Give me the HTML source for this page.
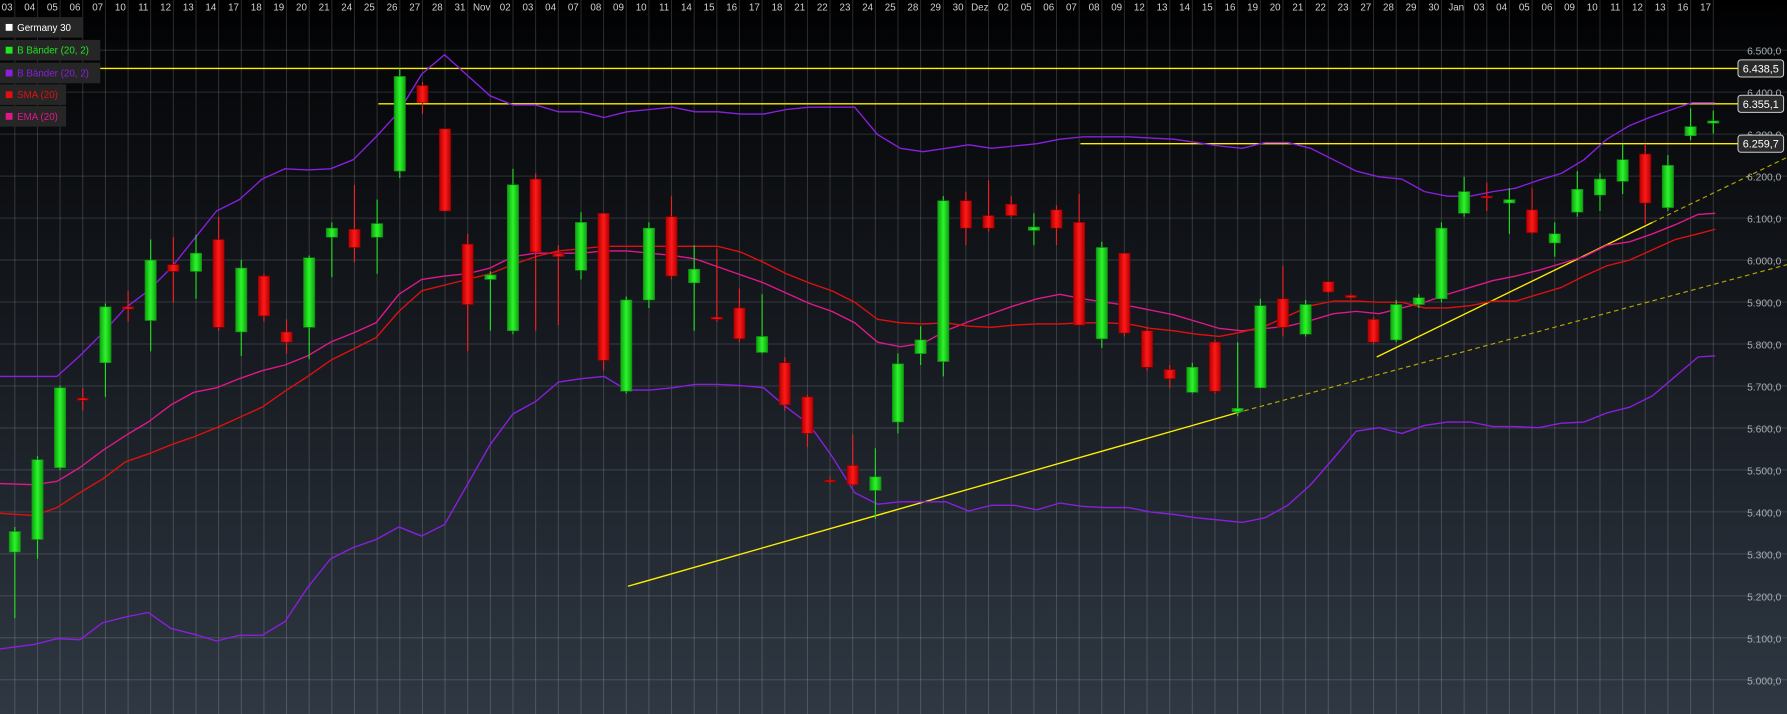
<!DOCTYPE html>
<html><head><meta charset="utf-8"><style>html,body{margin:0;padding:0;background:#000;overflow:hidden}svg{display:block}text{font-family:"Liberation Sans",sans-serif}</style></head><body>
<svg width="1787" height="714" viewBox="0 0 1568 626" preserveAspectRatio="none" xmlns="http://www.w3.org/2000/svg">
<defs>
<linearGradient id="bg" x1="0" y1="0" x2="0" y2="1"><stop offset="0" stop-color="#000"/><stop offset="0.07" stop-color="#050608"/><stop offset="0.5" stop-color="#171b21"/><stop offset="1" stop-color="#2f3843"/></linearGradient>
<linearGradient id="gc" x1="0" y1="0" x2="0" y2="1"><stop offset="0" stop-color="#1a9a1a"/><stop offset="0.5" stop-color="#22ee22"/><stop offset="1" stop-color="#1a9a1a"/></linearGradient>
<linearGradient id="gcg" x1="0" y1="0" x2="1" y2="0"><stop offset="0" stop-color="#10a010"/><stop offset="0.5" stop-color="#2cf52c"/><stop offset="1" stop-color="#10a010"/></linearGradient>
<linearGradient id="rcg" x1="0" y1="0" x2="1" y2="0"><stop offset="0" stop-color="#b00000"/><stop offset="0.5" stop-color="#ff1a1a"/><stop offset="1" stop-color="#b00000"/></linearGradient>
</defs>
<rect width="1568" height="626" fill="url(#bg)"/>
<g stroke="#ffffff" stroke-opacity="0.14" stroke-width="0.9">
<line x1="0" y1="44" x2="1568" y2="44"/><line x1="0" y1="80.8" x2="1568" y2="80.8"/><line x1="0" y1="117.6" x2="1568" y2="117.6"/><line x1="0" y1="154.4" x2="1568" y2="154.4"/><line x1="0" y1="191.2" x2="1568" y2="191.2"/><line x1="0" y1="228" x2="1568" y2="228"/><line x1="0" y1="264.8" x2="1568" y2="264.8"/><line x1="0" y1="301.6" x2="1568" y2="301.6"/><line x1="0" y1="338.4" x2="1568" y2="338.4"/><line x1="0" y1="375.2" x2="1568" y2="375.2"/><line x1="0" y1="412" x2="1568" y2="412"/><line x1="0" y1="448.8" x2="1568" y2="448.8"/><line x1="0" y1="485.6" x2="1568" y2="485.6"/><line x1="0" y1="522.4" x2="1568" y2="522.4"/><line x1="0" y1="559.2" x2="1568" y2="559.2"/><line x1="0" y1="596" x2="1568" y2="596"/>
</g>
<g stroke="#ffffff" stroke-opacity="0.16" stroke-width="0.9" id="vg">
<line x1="13" y1="0" x2="13" y2="626"/><line x1="32.9" y1="0" x2="32.9" y2="626"/><line x1="52.7" y1="0" x2="52.7" y2="626"/><line x1="72.6" y1="0" x2="72.6" y2="626"/><line x1="92.5" y1="0" x2="92.5" y2="626"/><line x1="112.4" y1="0" x2="112.4" y2="626"/><line x1="132.2" y1="0" x2="132.2" y2="626"/><line x1="152.1" y1="0" x2="152.1" y2="626"/><line x1="172" y1="0" x2="172" y2="626"/><line x1="191.8" y1="0" x2="191.8" y2="626"/><line x1="211.7" y1="0" x2="211.7" y2="626"/><line x1="231.6" y1="0" x2="231.6" y2="626"/><line x1="251.4" y1="0" x2="251.4" y2="626"/><line x1="271.3" y1="0" x2="271.3" y2="626"/><line x1="291.2" y1="0" x2="291.2" y2="626"/><line x1="311" y1="0" x2="311" y2="626"/><line x1="330.9" y1="0" x2="330.9" y2="626"/><line x1="350.8" y1="0" x2="350.8" y2="626"/><line x1="370.7" y1="0" x2="370.7" y2="626"/><line x1="390.5" y1="0" x2="390.5" y2="626"/><line x1="410.4" y1="0" x2="410.4" y2="626"/><line x1="430.3" y1="0" x2="430.3" y2="626"/><line x1="450.1" y1="0" x2="450.1" y2="626"/><line x1="470" y1="0" x2="470" y2="626"/><line x1="489.9" y1="0" x2="489.9" y2="626"/><line x1="509.8" y1="0" x2="509.8" y2="626"/><line x1="529.6" y1="0" x2="529.6" y2="626"/><line x1="549.5" y1="0" x2="549.5" y2="626"/><line x1="569.4" y1="0" x2="569.4" y2="626"/><line x1="589.2" y1="0" x2="589.2" y2="626"/><line x1="609.1" y1="0" x2="609.1" y2="626"/><line x1="629" y1="0" x2="629" y2="626"/><line x1="648.8" y1="0" x2="648.8" y2="626"/><line x1="668.7" y1="0" x2="668.7" y2="626"/><line x1="688.6" y1="0" x2="688.6" y2="626"/><line x1="708.5" y1="0" x2="708.5" y2="626"/><line x1="728.3" y1="0" x2="728.3" y2="626"/><line x1="748.2" y1="0" x2="748.2" y2="626"/><line x1="768.1" y1="0" x2="768.1" y2="626"/><line x1="787.9" y1="0" x2="787.9" y2="626"/><line x1="807.8" y1="0" x2="807.8" y2="626"/><line x1="827.7" y1="0" x2="827.7" y2="626"/><line x1="847.5" y1="0" x2="847.5" y2="626"/><line x1="867.4" y1="0" x2="867.4" y2="626"/><line x1="887.3" y1="0" x2="887.3" y2="626"/><line x1="907.2" y1="0" x2="907.2" y2="626"/><line x1="927" y1="0" x2="927" y2="626"/><line x1="946.9" y1="0" x2="946.9" y2="626"/><line x1="966.8" y1="0" x2="966.8" y2="626"/><line x1="986.6" y1="0" x2="986.6" y2="626"/><line x1="1006.5" y1="0" x2="1006.5" y2="626"/><line x1="1026.4" y1="0" x2="1026.4" y2="626"/><line x1="1046.2" y1="0" x2="1046.2" y2="626"/><line x1="1066.1" y1="0" x2="1066.1" y2="626"/><line x1="1086" y1="0" x2="1086" y2="626"/><line x1="1105.9" y1="0" x2="1105.9" y2="626"/><line x1="1125.7" y1="0" x2="1125.7" y2="626"/><line x1="1145.6" y1="0" x2="1145.6" y2="626"/><line x1="1165.5" y1="0" x2="1165.5" y2="626"/><line x1="1185.3" y1="0" x2="1185.3" y2="626"/><line x1="1205.2" y1="0" x2="1205.2" y2="626"/><line x1="1225.1" y1="0" x2="1225.1" y2="626"/><line x1="1244.9" y1="0" x2="1244.9" y2="626"/><line x1="1264.8" y1="0" x2="1264.8" y2="626"/><line x1="1284.7" y1="0" x2="1284.7" y2="626"/><line x1="1304.6" y1="0" x2="1304.6" y2="626"/><line x1="1324.4" y1="0" x2="1324.4" y2="626"/><line x1="1344.3" y1="0" x2="1344.3" y2="626"/><line x1="1364.2" y1="0" x2="1364.2" y2="626"/><line x1="1384" y1="0" x2="1384" y2="626"/><line x1="1403.9" y1="0" x2="1403.9" y2="626"/><line x1="1423.8" y1="0" x2="1423.8" y2="626"/><line x1="1443.6" y1="0" x2="1443.6" y2="626"/><line x1="1463.5" y1="0" x2="1463.5" y2="626"/><line x1="1483.4" y1="0" x2="1483.4" y2="626"/><line x1="1503.3" y1="0" x2="1503.3" y2="626"/>
</g>
<g fill="#d0d0d0" font-size="8.6" text-anchor="end">
<text x="11" y="9">03</text><text x="30.9" y="9">04</text><text x="50.7" y="9">05</text><text x="70.6" y="9">06</text><text x="90.5" y="9">07</text><text x="110.4" y="9">10</text><text x="130.2" y="9">11</text><text x="150.1" y="9">12</text><text x="170" y="9">13</text><text x="189.8" y="9">14</text><text x="209.7" y="9">17</text><text x="229.6" y="9">18</text><text x="249.4" y="9">19</text><text x="269.3" y="9">20</text><text x="289.2" y="9">21</text><text x="309" y="9">24</text><text x="328.9" y="9">25</text><text x="348.8" y="9">26</text><text x="368.7" y="9">27</text><text x="388.5" y="9">28</text><text x="408.4" y="9">31</text><text x="430.3" y="9">Nov</text><text x="448.1" y="9">02</text><text x="468" y="9">03</text><text x="487.9" y="9">04</text><text x="507.8" y="9">07</text><text x="527.6" y="9">08</text><text x="547.5" y="9">09</text><text x="567.4" y="9">10</text><text x="587.2" y="9">11</text><text x="607.1" y="9">14</text><text x="627" y="9">15</text><text x="646.8" y="9">16</text><text x="666.7" y="9">17</text><text x="686.6" y="9">18</text><text x="706.5" y="9">21</text><text x="726.3" y="9">22</text><text x="746.2" y="9">23</text><text x="766.1" y="9">24</text><text x="785.9" y="9">25</text><text x="805.8" y="9">28</text><text x="825.7" y="9">29</text><text x="845.5" y="9">30</text><text x="867.4" y="9">Dez</text><text x="885.3" y="9">02</text><text x="905.2" y="9">05</text><text x="925" y="9">06</text><text x="944.9" y="9">07</text><text x="964.8" y="9">08</text><text x="984.6" y="9">09</text><text x="1004.5" y="9">12</text><text x="1024.4" y="9">13</text><text x="1044.2" y="9">14</text><text x="1064.1" y="9">15</text><text x="1084" y="9">16</text><text x="1103.9" y="9">19</text><text x="1123.7" y="9">20</text><text x="1143.6" y="9">21</text><text x="1163.5" y="9">22</text><text x="1183.3" y="9">23</text><text x="1203.2" y="9">27</text><text x="1223.1" y="9">28</text><text x="1242.9" y="9">29</text><text x="1262.8" y="9">30</text><text x="1284.7" y="9">Jan</text><text x="1302.6" y="9">03</text><text x="1322.4" y="9">04</text><text x="1342.3" y="9">05</text><text x="1362.2" y="9">06</text><text x="1382" y="9">09</text><text x="1401.9" y="9">10</text><text x="1421.8" y="9">11</text><text x="1441.6" y="9">12</text><text x="1461.5" y="9">13</text><text x="1481.4" y="9">16</text><text x="1501.3" y="9">17</text>
</g>
<g fill="#a8adb3" font-size="9" text-anchor="end">
<text x="1563" y="48">6.500,0</text><text x="1563" y="84.8">6.400,0</text><text x="1563" y="121.6">6.300,0</text><text x="1563" y="158.4">6.200,0</text><text x="1563" y="195.2">6.100,0</text><text x="1563" y="232">6.000,0</text><text x="1563" y="268.8">5.900,0</text><text x="1563" y="305.6">5.800,0</text><text x="1563" y="342.4">5.700,0</text><text x="1563" y="379.2">5.600,0</text><text x="1563" y="416">5.500,0</text><text x="1563" y="452.8">5.400,0</text><text x="1563" y="489.6">5.300,0</text><text x="1563" y="526.4">5.200,0</text><text x="1563" y="563.2">5.100,0</text><text x="1563" y="600">5.000,0</text>
</g>
<!-- yellow lines -->
<g stroke="#ffee00" stroke-width="1.2" fill="none">
<line x1="0" y1="60" x2="1525" y2="60"/>
<line x1="332" y1="91" x2="1525" y2="91"/>
<line x1="948" y1="126" x2="1525" y2="126"/>
<line x1="551" y1="514" x2="1085" y2="362"/>
<line x1="1208" y1="313" x2="1450" y2="195"/>
</g>
<g stroke="#b8a800" stroke-width="1" stroke-dasharray="4,3" fill="none">
<line x1="1085" y1="362" x2="1568" y2="232"/>
<line x1="1450" y1="195" x2="1568" y2="138"/>
</g>
<!-- indicator lines -->
<g fill="none" stroke-width="1.2" stroke-linejoin="round">
<polyline stroke="#8a1fe0" points="0,330 30,330 50,330 70,312 90,292 110,270 130,255 150,235 170,210 190,185 210,175 230,157 250,148 270,149 290,148 310,140 330,120 350,98 370,65 390,48 410,66 430,84 450,92 470,92 490,98 510,98 530,103 550,98 570,96 590,94 610,98 630,98 650,100 670,100 690,96 710,94 730,94 750,94 770,118 790,130 810,133 830,130 850,127 870,130 890,128 910,126 930,122 950,120 970,120 990,120 1010,121 1030,122 1050,125 1070,128 1090,130 1110,125 1130,125 1150,130 1170,140 1190,150 1210,155 1230,157 1250,168 1270,172 1290,172 1310,168 1330,165 1350,158 1370,152 1390,140 1410,122 1430,110 1450,102 1470,95 1485,90 1505,90"/>
<polyline stroke="#8a1fe0" points="0,569 30,565 50,560 70,561 90,546 110,541 130,537 150,551 170,556 190,562 210,557 230,557 250,545 270,515 290,490 310,480 330,473 350,462 370,470 390,460 410,425 430,390 450,363 470,352 490,335 510,332 530,330 550,342 570,342 590,340 610,337 630,337 650,338 670,340 690,357 710,372 730,400 750,432 770,442 790,440 810,440 830,440 850,448 870,443 890,443 910,447 930,441 950,444 970,445 990,445 1010,449 1030,451 1050,454 1070,456 1090,458 1110,454 1130,443 1150,425 1170,402 1190,378 1210,375 1230,380 1250,373 1270,370 1290,370 1310,374 1330,374 1350,375 1370,371 1390,370 1410,362 1430,357 1450,347 1470,330 1490,313 1505,312"/>
<polyline stroke="#e0188a" points="0,424 30,425 50,422 70,410 90,395 110,382 130,370 150,355 170,344 190,340 210,332 230,325 250,320 270,312 290,300 310,292 330,283 350,258 370,245 390,242 410,240 430,235 450,225 470,222 490,222 510,222 530,220 550,220 570,222 590,224 610,227 630,234 650,241 670,248 690,257 710,266 730,273 750,283 770,300 790,304 810,301 830,290 850,282 870,275 890,268 910,262 930,258 950,262 970,265 990,268 1010,272 1030,276 1050,282 1070,288 1090,290 1110,288 1130,286 1150,281 1170,275 1190,273 1210,275 1230,270 1250,265 1270,258 1290,252 1310,246 1330,242 1350,237 1370,231 1390,225 1410,215 1430,212 1450,205 1470,197 1490,188 1505,187"/>
<polyline stroke="#e01010" points="0,450 30,452 50,445 70,432 90,420 110,405 130,398 150,390 170,383 190,375 210,366 230,357 250,343 270,330 290,316 310,306 330,296 350,273 370,255 390,250 410,245 430,240 450,232 470,225 490,220 510,218 530,216 550,216 570,216 590,216 610,216 630,216 650,221 670,230 690,240 710,248 730,255 750,265 770,280 790,283 810,284 830,283 850,286 870,287 890,285 910,284 930,284 950,283 970,283 990,284 1010,288 1030,290 1050,293 1070,295 1090,291 1110,286 1130,277 1150,268 1170,264 1190,264 1210,265 1230,265 1250,270 1270,270 1290,268 1310,264 1330,264 1350,258 1370,252 1390,242 1410,233 1430,228 1450,219 1470,210 1490,205 1505,201"/>
</g>
<!-- candles: green -->
<g stroke="#22dd22" stroke-width="1">
<line x1="13" y1="462" x2="13" y2="542"/><line x1="32.9" y1="400" x2="32.9" y2="490"/><line x1="52.7" y1="338" x2="52.7" y2="412"/><line x1="92.5" y1="266" x2="92.5" y2="348"/><line x1="132.2" y1="210" x2="132.2" y2="308"/><line x1="172" y1="206" x2="172" y2="262"/><line x1="211.7" y1="228" x2="211.7" y2="312"/><line x1="271.3" y1="224" x2="271.3" y2="315"/><line x1="291.2" y1="195" x2="291.2" y2="243"/><line x1="330.9" y1="175" x2="330.9" y2="240"/><line x1="350.8" y1="60" x2="350.8" y2="156"/><line x1="430.3" y1="238" x2="430.3" y2="290"/><line x1="450.1" y1="148" x2="450.1" y2="293"/><line x1="509.8" y1="186" x2="509.8" y2="245"/><line x1="549.5" y1="260" x2="549.5" y2="345"/><line x1="569.4" y1="195" x2="569.4" y2="270"/><line x1="609.1" y1="215" x2="609.1" y2="290"/><line x1="668.7" y1="258" x2="668.7" y2="310"/><line x1="768.1" y1="393" x2="768.1" y2="455"/><line x1="787.9" y1="310" x2="787.9" y2="380"/><line x1="807.8" y1="286" x2="807.8" y2="320"/><line x1="827.7" y1="172" x2="827.7" y2="330"/><line x1="907.2" y1="187" x2="907.2" y2="215"/><line x1="966.8" y1="212" x2="966.8" y2="305"/><line x1="1046.2" y1="318" x2="1046.2" y2="345"/><line x1="1086" y1="300" x2="1086" y2="365"/><line x1="1105.9" y1="262" x2="1105.9" y2="340"/><line x1="1145.6" y1="263" x2="1145.6" y2="295"/><line x1="1225.1" y1="263" x2="1225.1" y2="300"/><line x1="1244.9" y1="258" x2="1244.9" y2="270"/><line x1="1264.8" y1="195" x2="1264.8" y2="265"/><line x1="1284.7" y1="155" x2="1284.7" y2="190"/><line x1="1324.4" y1="165" x2="1324.4" y2="205"/><line x1="1364.2" y1="195" x2="1364.2" y2="225"/><line x1="1384" y1="150" x2="1384" y2="190"/><line x1="1403.9" y1="152" x2="1403.9" y2="185"/><line x1="1423.8" y1="126" x2="1423.8" y2="170"/><line x1="1463.5" y1="136" x2="1463.5" y2="185"/><line x1="1483.4" y1="95" x2="1483.4" y2="123"/><line x1="1503.3" y1="97" x2="1503.3" y2="117"/>
</g>
<g fill="url(#gcg)" stroke="#118811" stroke-width="0.5">
<rect x="8" y="466" width="10" height="18"/><rect x="27.9" y="403" width="10" height="70"/><rect x="47.7" y="340" width="10" height="70"/><rect x="87.5" y="269" width="10" height="49"/><rect x="127.2" y="228" width="10" height="53"/><rect x="167" y="222" width="10" height="16"/><rect x="206.7" y="235" width="10" height="56"/><rect x="266.3" y="226" width="10" height="61"/><rect x="286.2" y="200" width="10" height="8"/><rect x="325.9" y="196" width="10" height="12"/><rect x="345.8" y="67" width="10" height="83"/><rect x="425.3" y="241" width="10" height="4"/><rect x="445.1" y="162" width="10" height="128"/><rect x="504.8" y="195" width="10" height="42"/><rect x="544.5" y="263" width="10" height="80"/><rect x="564.4" y="200" width="10" height="63"/><rect x="604.1" y="236" width="10" height="12"/><rect x="663.7" y="295" width="10" height="14"/><rect x="763.1" y="418" width="10" height="12"/><rect x="782.9" y="319" width="10" height="51"/><rect x="802.8" y="298" width="10" height="12"/><rect x="822.7" y="176" width="10" height="141"/><rect x="902.2" y="199" width="10" height="3"/><rect x="961.8" y="217" width="10" height="80"/><rect x="1041.2" y="322" width="10" height="22"/><rect x="1081" y="358" width="10" height="3"/><rect x="1100.9" y="268" width="10" height="72"/><rect x="1140.6" y="267" width="10" height="26"/><rect x="1220.1" y="267" width="10" height="31"/><rect x="1239.9" y="261" width="10" height="6"/><rect x="1259.8" y="200" width="10" height="62"/><rect x="1279.7" y="168" width="10" height="19"/><rect x="1319.4" y="175" width="10" height="3"/><rect x="1359.2" y="205" width="10" height="8"/><rect x="1379" y="166" width="10" height="20"/><rect x="1398.9" y="157" width="10" height="14"/><rect x="1418.8" y="140" width="10" height="19"/><rect x="1458.5" y="145" width="10" height="37"/><rect x="1478.4" y="111" width="10" height="8"/><rect x="1498.3" y="106" width="10" height="2"/>
</g>
<!-- red -->
<g stroke="#ee2020" stroke-width="1">
<line x1="72.6" y1="340" x2="72.6" y2="360"/><line x1="112.4" y1="255" x2="112.4" y2="282"/><line x1="152.1" y1="208" x2="152.1" y2="265"/><line x1="191.8" y1="190" x2="191.8" y2="290"/><line x1="231.6" y1="240" x2="231.6" y2="282"/><line x1="251.4" y1="280" x2="251.4" y2="310"/><line x1="311" y1="162" x2="311" y2="230"/><line x1="370.7" y1="72" x2="370.7" y2="100"/><line x1="390.5" y1="113" x2="390.5" y2="185"/><line x1="410.4" y1="205" x2="410.4" y2="308"/><line x1="470" y1="152" x2="470" y2="290"/><line x1="489.9" y1="215" x2="489.9" y2="285"/><line x1="529.6" y1="187" x2="529.6" y2="325"/><line x1="589.2" y1="172" x2="589.2" y2="245"/><line x1="629" y1="218" x2="629" y2="282"/><line x1="648.8" y1="253" x2="648.8" y2="300"/><line x1="688.6" y1="313" x2="688.6" y2="360"/><line x1="708.5" y1="346" x2="708.5" y2="392"/><line x1="728.3" y1="418" x2="728.3" y2="424"/><line x1="748.2" y1="381" x2="748.2" y2="426"/><line x1="847.5" y1="168" x2="847.5" y2="215"/><line x1="867.4" y1="158" x2="867.4" y2="203"/><line x1="887.3" y1="172" x2="887.3" y2="190"/><line x1="927" y1="180" x2="927" y2="215"/><line x1="946.9" y1="170" x2="946.9" y2="285"/><line x1="986.6" y1="222" x2="986.6" y2="295"/><line x1="1006.5" y1="287" x2="1006.5" y2="325"/><line x1="1026.4" y1="320" x2="1026.4" y2="340"/><line x1="1066.1" y1="298" x2="1066.1" y2="345"/><line x1="1125.7" y1="233" x2="1125.7" y2="295"/><line x1="1165.5" y1="247" x2="1165.5" y2="257"/><line x1="1185.3" y1="258" x2="1185.3" y2="262"/><line x1="1205.2" y1="278" x2="1205.2" y2="302"/><line x1="1304.6" y1="160" x2="1304.6" y2="185"/><line x1="1344.3" y1="165" x2="1344.3" y2="205"/><line x1="1443.6" y1="126" x2="1443.6" y2="196"/>
</g>
<g fill="url(#rcg)" stroke="#880000" stroke-width="0.5">
<rect x="67.6" y="349" width="10" height="2"/><rect x="107.4" y="269" width="10" height="2"/><rect x="147.1" y="232" width="10" height="6"/><rect x="186.8" y="210" width="10" height="77"/><rect x="226.6" y="242" width="10" height="35"/><rect x="246.4" y="291" width="10" height="9"/><rect x="306" y="201" width="10" height="16"/><rect x="365.7" y="75" width="10" height="15"/><rect x="385.5" y="113" width="10" height="72"/><rect x="405.4" y="214" width="10" height="53"/><rect x="465" y="157" width="10" height="64"/><rect x="484.9" y="222" width="10" height="3"/><rect x="524.6" y="187" width="10" height="129"/><rect x="584.2" y="190" width="10" height="52"/><rect x="624" y="278" width="10" height="2"/><rect x="643.8" y="270" width="10" height="27"/><rect x="683.6" y="318" width="10" height="37"/><rect x="703.5" y="348" width="10" height="32"/><rect x="723.3" y="421" width="10" height="1.5"/><rect x="743.2" y="408" width="10" height="17"/><rect x="842.5" y="176" width="10" height="24"/><rect x="862.4" y="189" width="10" height="11"/><rect x="882.3" y="179" width="10" height="10"/><rect x="922" y="184" width="10" height="16"/><rect x="941.9" y="195" width="10" height="90"/><rect x="981.6" y="222" width="10" height="70"/><rect x="1001.5" y="290" width="10" height="32"/><rect x="1021.4" y="324" width="10" height="8"/><rect x="1061.1" y="300" width="10" height="43"/><rect x="1120.7" y="262" width="10" height="25"/><rect x="1160.5" y="247" width="10" height="9"/><rect x="1180.3" y="259" width="10" height="2"/><rect x="1200.2" y="280" width="10" height="20"/><rect x="1299.6" y="172" width="10" height="1.5"/><rect x="1339.3" y="184" width="10" height="20"/><rect x="1438.6" y="135" width="10" height="43"/>
</g>
<!-- right value boxes -->
<g font-size="9.5" fill="#ffffff" text-anchor="middle">
<rect x="1525" y="52.5" width="40" height="15" rx="2.5" fill="#2a2a2a" stroke="#cfcfcf" stroke-width="0.9"/><text x="1545" y="63.5">6.438,5</text>
<rect x="1525" y="83.5" width="40" height="15" rx="2.5" fill="#2a2a2a" stroke="#cfcfcf" stroke-width="0.9"/><text x="1545" y="94.5">6.355,1</text>
<rect x="1525" y="118.5" width="40" height="15" rx="2.5" fill="#2a2a2a" stroke="#cfcfcf" stroke-width="0.9"/><text x="1545" y="129.5">6.259,7</text>
</g>
<!-- legend -->
<g font-size="8.6">
<rect x="0" y="15" width="73" height="18" fill="#262626"/><rect x="5" y="21" width="6" height="6" fill="#fff"/><text x="15" y="27" fill="#fff">Germany 30</text>
<rect x="0" y="35" width="88" height="18" fill="#262626"/><rect x="5" y="41" width="6" height="6" fill="#1ee81e"/><text x="15" y="47" fill="#1ee81e">B Bänder (20, 2)</text>
<rect x="0" y="55" width="88" height="18" fill="#262626"/><rect x="5" y="61" width="6" height="6" fill="#8a1fe0"/><text x="15" y="67" fill="#8a1fe0">B Bänder (20, 2)</text>
<rect x="0" y="74" width="58" height="18" fill="#262626"/><rect x="5" y="80" width="6" height="6" fill="#e01010"/><text x="15" y="86" fill="#e01010">SMA (20)</text>
<rect x="0" y="93" width="58" height="18" fill="#262626"/><rect x="5" y="99" width="6" height="6" fill="#e0188a"/><text x="15" y="105" fill="#e0188a">EMA (20)</text>
</g>
</svg>
</body></html>
